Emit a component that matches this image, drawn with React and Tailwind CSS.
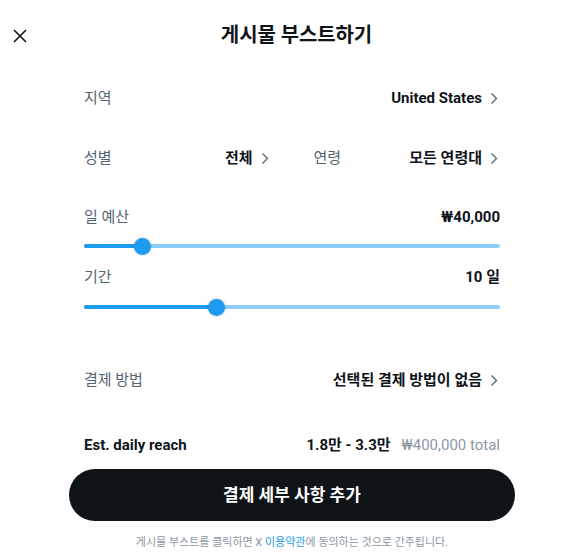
const Chevron = () => (
    <svg width="8" height="13" viewBox="0 0 8 13" className="shrink-0 text-[#536471]">
        <path d="M1.5 1.5 6.5 6.5 1.5 11.5" fill="none" stroke="currentColor" strokeWidth="1.3" />
    </svg>
);

const Slider = ({ pct }) => (
    <div className="relative h-[20px] flex items-center">
        <div className="w-full h-[4px] rounded-full bg-[#8ecdf8]" />
        <div className="absolute left-0 h-[4px] rounded-full bg-[#1d9bf0]" style={{ width: `${pct}%` }} />
        <div
            className="absolute w-[17px] h-[17px] -ml-[8.5px] rounded-full bg-[#1d9bf0] shadow-[0_0_3px_rgba(0,0,0,0.25)]"
            style={{ left: `${pct}%` }}
        />
    </div>
);

const SelectRow = ({ label, value, className = "" }) => (
    <div className={`flex items-center justify-between ${className}`}>
        <span className="text-[#536471]">{label}</span>
        <span className="flex items-center gap-[8px] font-bold text-[#0f1419]">
            {value}
            <Chevron />
        </span>
    </div>
);

export default function App() {
    return (
        <div
            className="w-[584px] h-[560px] bg-white text-[15px] leading-[20px] overflow-hidden"
            style={{ fontFamily: 'Roboto, "Noto Sans CJK KR", sans-serif' }}
        >
            {/* header */}
            <div className="relative h-[70px] flex items-center justify-center">
                <button className="absolute left-[12px] top-[28px] p-[1px] text-[#0f1419]">
                    <svg width="14" height="14" viewBox="0 0 14 14">
                        <path d="M1 1 13 13M13 1 1 13" stroke="currentColor" strokeWidth="1.6" />
                    </svg>
                </button>
                <h1 className="ml-[9px] text-[20px] font-bold text-[#0f1419] tracking-[-0.1px]">게시물 부스트하기</h1>
            </div>

            <div className="px-[84px] pr-[86px] -mt-[2px]">
                <SelectRow label="지역" value="United States" className="h-[60px]" />

                <div className="h-[60px] flex items-center gap-[45px]">
                    <SelectRow label="성별" value="전체" className="flex-1" />
                    <SelectRow label="연령" value="모든 연령대" className="flex-1" />
                </div>
            </div>

            <div className="px-[84px]">
                <div className="mt-[19px] flex justify-between">
                    <span className="text-[#536471]">일 예산</span>
                    <span className="font-bold text-[#0f1419]">₩40,000</span>
                </div>
                <div className="mt-[9px]">
                    <Slider pct={14} />
                </div>

                <div className="mt-[11px] flex justify-between">
                    <span className="text-[#536471]">기간</span>
                    <span className="font-bold text-[#0f1419]">10 일</span>
                </div>
                <div className="mt-[10px]">
                    <Slider pct={31.8} />
                </div>
            </div>

            <div className="px-[84px] pr-[86px]">
                <SelectRow label="결제 방법" value="선택된 결제 방법이 없음" className="mt-[33px] h-[60px]" />
            </div>

            <div className="px-[84px]">
                <div className="mt-[25px] flex items-center justify-between">
                    <span className="font-bold text-[#0f1419]">Est. daily reach</span>
                    <span className="flex items-center gap-[11px]">
                        <span className="font-bold text-[#0f1419]">1.8만 - 3.3만</span>
                        <span className="text-[#8b98a5]">₩400,000 total</span>
                    </span>
                </div>
            </div>

            <div className="px-[69px] mt-[14px]">
                <button className="w-full h-[52px] rounded-full bg-[#0f1419] text-white text-[17px] font-bold">
                    결제 세부 사항 추가
                </button>
                <p className="mt-[14px] text-center text-[11px] leading-[16px] text-[#8b98a5]">
                    게시물 부스트를 클릭하면 X <span className="text-[#1d9bf0]">이용약관</span>에 동의하는 것으로 간주됩니다.
                </p>
            </div>
        </div>
    );
}
